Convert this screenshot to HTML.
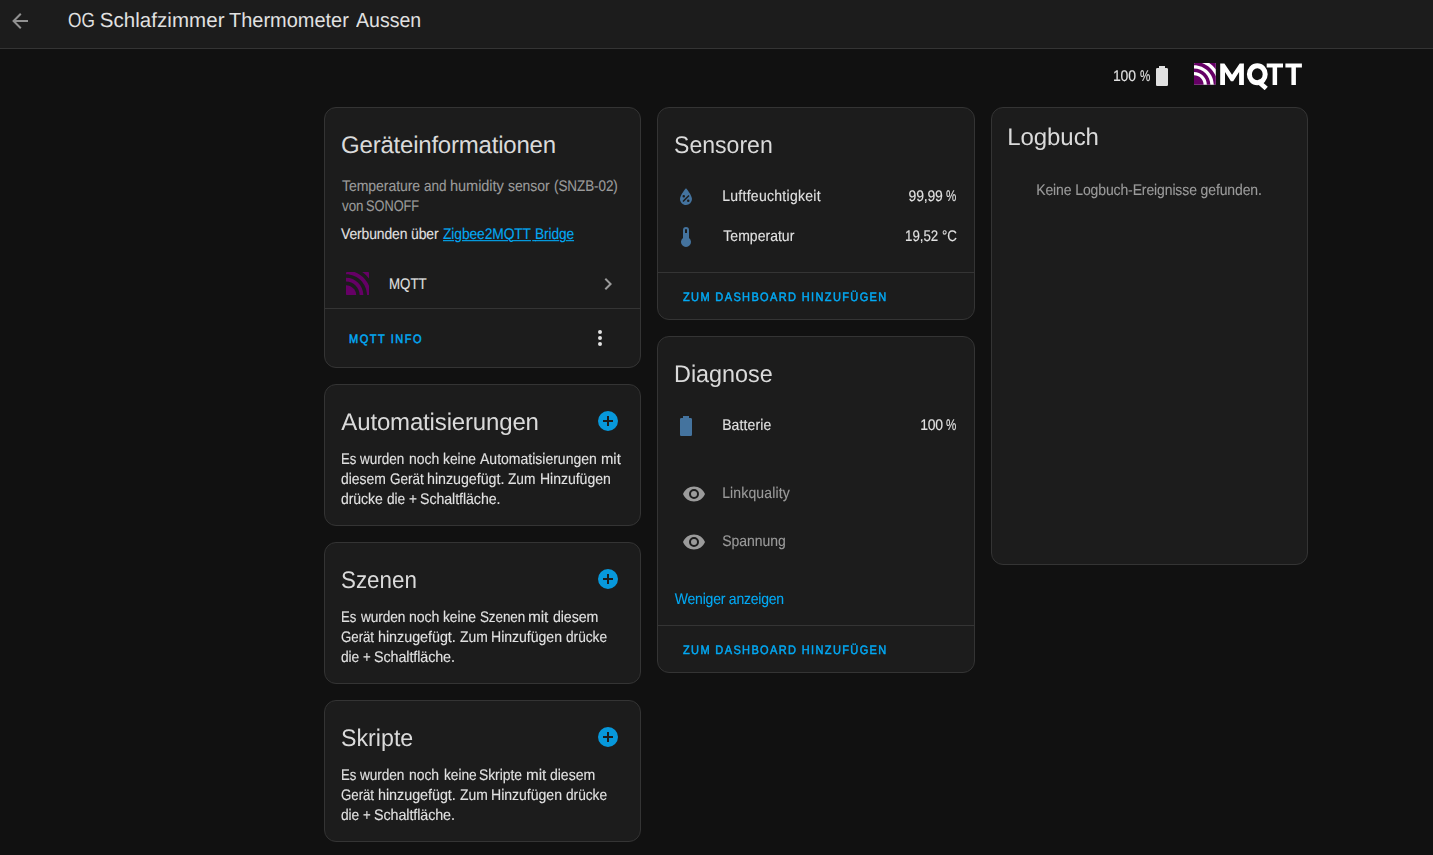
<!DOCTYPE html>
<html lang="de"><head><meta charset="utf-8"><title>OG Schlafzimmer Thermometer Aussen</title>
<style>
html,body{margin:0;padding:0}
body{width:1433px;height:855px;overflow:hidden;position:relative;background:#111111;
 font-family:"Liberation Sans",sans-serif;color:#e1e1e1}
.t{position:absolute;white-space:pre;line-height:20px;height:20px;margin:0;padding:0;display:block;font-weight:400;text-decoration:none;text-rendering:geometricPrecision}
.ul,.ul .w{text-decoration:underline;text-decoration-thickness:.91px;text-underline-offset:.7px}
.btn{-webkit-text-stroke:.5px currentColor}
.b{-webkit-text-stroke:.1px currentColor}
.w{display:inline-block;transform-origin:0 50%}
.pc{display:inline-block;width:.74em;transform:scaleX(.83);transform-origin:0 50%}
.box{position:absolute;box-sizing:border-box;margin:0;padding:0}
header.box{background:#1c1c1c;border-bottom:1px solid #343434}
.card{background:#1c1c1c;border:1px solid #343434;border-radius:12px}
.g{will-change:transform}
.ic{position:absolute;display:block}
.hr{position:absolute;left:0;width:100%;height:1px;background:#343434}
</style></head>
<body>
<header class="box" style="left:0px;top:0px;width:1433px;height:49px;">
<svg class="ic" style="left:8px;top:8.5px;width:24px;height:24px" viewBox="0 0 24 24"><path fill="#919191" d="M20,11V13H8L13.5,18.5L12.08,19.92L4.16,12L12.08,4.08L13.5,5.5L8,11H20Z"/></svg>
<span class="t" style="left:68.16px;top:11.00px;font-size:20.5px;letter-spacing:0.000px;color:#e1e1e1;transform:scaleX(0.8411);transform-origin:0 15.90px;">OG</span>
<span class="t" style="left:99.65px;top:11.00px;font-size:20.5px;letter-spacing:0.066px;color:#e1e1e1;">Schlafzimmer</span>
<span class="t" style="left:229.28px;top:11.00px;font-size:20.5px;letter-spacing:0.000px;color:#e1e1e1;transform:scaleX(0.9739);transform-origin:0 15.90px;">Thermometer</span>
<span class="t" style="left:355.85px;top:11.00px;font-size:20.5px;letter-spacing:0.000px;color:#e1e1e1;transform:scaleX(0.9524);transform-origin:0 15.90px;">Aussen</span>
</header>
<div class="box g" style="left:1100px;top:56px;width:220px;height:40px;">
<span class="t b" style="left:12.97px;top:9.65px;font-size:14px;letter-spacing:-0.135px;color:#e1e1e1;transform:scaleY(1.1);transform-origin:0 14.85px;">100 <span class="pc">%</span></span>
<svg class="ic" style="left:50px;top:8px;width:24px;height:24px" viewBox="0 0 24 24"><path fill="#e1e1e1" d="M16.67,4H15V2H9V4H7.33A1.33,1.33 0 0,0 6,5.33V20.67C6,21.4 6.6,22 7.33,22H16.67A1.33,1.33 0 0,0 18,20.67V5.33C18,4.6 17.4,4 16.67,4Z"/></svg>
<svg class="ic" style="left:94px;top:7.2px;width:21.8px;height:21.8px" viewBox="7.1 7.1 305.8 305.8"><rect x="7.1" y="7.1" width="305.8" height="305.8" rx="15" fill="#fff"/><path fill="#660066" d="M7.1,180.6v117.1c0,8.4,6.8,15.3,15.3,15.3H142C141.1,239.8,80.9,180.7,7.1,180.6z"/><path fill="#660066" d="M7.1,84.1v49.8c99,0.9,179.4,80.7,180.4,179.1h48.9C235.6,186.7,133.1,84.2,7.1,84.1z"/><path fill="#660066" d="M312.9,297.6V193.5C278.1,107.2,207.3,38.9,119,7.1H22.4c-8.4,0-15.3,6.8-15.3,15.3v15c152.6,0.9,276.6,123.9,277.6,275.6h13C306.1,312.9,312.9,306.1,312.9,297.6z"/><path fill="#660066" d="M272.6,49.8c14.5,14.4,28.6,31.7,40.4,47.8V22.4c0-8.4-6.8-15.3-15.3-15.3h-77.3C238.4,19.7,256.6,33.9,272.6,49.8z"/></svg>
<svg class="ic" style="left:93px;top:6px;width:112px;height:28px" viewBox="0 0 112 28">
<g fill="#fff">
<path d="M27.2,22.9V1.5h4.2l7.65,11.2l7.65,-11.2h4.2V22.9h-4.8V9.9l-5.9,9.3h-2.3l-5.9,-9.3V22.9z"/>
<ellipse cx="64.3" cy="12.2" rx="7.9" ry="8.5" fill="none" stroke="#fff" stroke-width="5"/>
<path d="M62.6,20.2l3.6,-3.0l8.6,7.6l-3.1,3.4z"/>
<path d="M73.7,1.5h16.3v3.9h-5.9v17.5h-4.5v-17.5h-5.9z"/>
<path d="M92.4,1.5h16.5v3.9h-6v17.5h-4.5v-17.5h-6z"/>
</g></svg>
</div>
<section class="box card" style="left:324px;top:107px;width:317px;height:261px;">
<h2 class="t" style="left:16.08px;top:27.88px;font-size:24px;letter-spacing:-0.214px;color:#dadada;">Geräteinformationen</h2>
<p class="t b" style="left:16.53px;top:68.15px;font-size:14px;letter-spacing:-0.067px;color:#9b9b9b;transform:scaleY(1.1);transform-origin:0 14.85px;"><span class="w" style="transform:scaleX(1.0029);">Temperature</span> <span class="w" style="margin-left:0.44px;transform:scaleX(0.9653);">and</span> <span class="w" style="margin-left:-0.43px;transform:scaleX(1.0410);">humidity</span> <span class="w" style="margin-left:2.06px;transform:scaleX(0.9962);">sensor</span> <span class="w" style="margin-left:0.51px;transform:scaleX(0.9618);">(SNZB-02)</span></p>
<p class="t b" style="left:16.58px;top:88.15px;font-size:14px;letter-spacing:0.000px;color:#9b9b9b;transform:scaleY(1.1);transform-origin:0 14.85px;"><span class="w" style="transform:scaleX(0.9536);">von</span> <span class="w" style="margin-left:-1.65px;transform:scaleX(0.9109);">SONOFF</span></p>
<span class="t b" style="left:16.40px;top:115.85px;font-size:14px;letter-spacing:-0.100px;color:#e1e1e1;transform:scaleY(1.1);transform-origin:0 14.85px;"><span class="w" style="transform:scaleX(0.9931);">Verbunden</span> <span class="w" style="margin-left:-1.06px;transform:scaleX(0.9965);">über</span></span>
<a class="t b ul" style="left:118.04px;top:115.85px;font-size:14px;letter-spacing:-0.100px;color:#03a9f4;transform:scaleY(1.1);transform-origin:0 14.85px;"><span class="w" style="transform:scaleX(0.9867);">Zigbee2MQTT</span> <span class="w" style="margin-left:-0.51px;transform:scaleX(0.9791);">Bridge</span></a>
<svg class="ic" style="left:20.5px;top:164.2px;width:23.2px;height:23.2px" viewBox="7.1 7.1 305.8 305.8"><path fill="#660066" d="M7.1,180.6v117.1c0,8.4,6.8,15.3,15.3,15.3H142C141.1,239.8,80.9,180.7,7.1,180.6z"/><path fill="#660066" d="M7.1,84.1v49.8c99,0.9,179.4,80.7,180.4,179.1h48.9C235.6,186.7,133.1,84.2,7.1,84.1z"/><path fill="#660066" d="M312.9,297.6V193.5C278.1,107.2,207.3,38.9,119,7.1H22.4c-8.4,0-15.3,6.8-15.3,15.3v15c152.6,0.9,276.6,123.9,277.6,275.6h13C306.1,312.9,312.9,306.1,312.9,297.6z"/><path fill="#660066" d="M272.6,49.8c14.5,14.4,28.6,31.7,40.4,47.8V22.4c0-8.4-6.8-15.3-15.3-15.3h-77.3C238.4,19.7,256.6,33.9,272.6,49.8z"/></svg>
<span class="t b" style="left:64.06px;top:166.05px;font-size:14px;letter-spacing:0.000px;color:#e1e1e1;transform:scale(0.9497,1.1);transform-origin:0 14.85px;">MQTT</span>
<svg class="ic" style="left:271px;top:164px;width:24px;height:24px" viewBox="0 0 24 24"><path fill="#9b9b9b" d="M8.59,16.58L13.17,12L8.59,7.41L10,6L16,12L10,18L8.59,16.58Z"/></svg>
<div class="hr" style="top:200px"></div>
<span class="t btn" style="left:24.35px;top:220.56px;font-size:12.25px;letter-spacing:1.684px;color:#03a9f4;transform:scaleX(0.9000);transform-origin:0 14.24px;">MQTT INFO</span>
<svg class="ic" style="left:263px;top:218px;width:24px;height:24px" viewBox="0 0 24 24"><path fill="#e1e1e1" d="M12,16A2,2 0 0,1 14,18A2,2 0 0,1 12,20A2,2 0 0,1 10,18A2,2 0 0,1 12,16M12,10A2,2 0 0,1 14,12A2,2 0 0,1 12,14A2,2 0 0,1 10,12A2,2 0 0,1 12,10M12,4A2,2 0 0,1 14,6A2,2 0 0,1 12,8A2,2 0 0,1 10,6A2,2 0 0,1 12,4Z"/></svg>
</section>
<section class="box card g" style="left:324px;top:384px;width:317px;height:142px;">
<h2 class="t" style="left:16.35px;top:28.28px;font-size:24px;letter-spacing:-0.158px;color:#dadada;">Automatisierungen</h2>
<svg class="ic" style="left:271px;top:24px;width:24px;height:24px" viewBox="0 0 24 24"><path fill="#0798db" d="M17,13H13V17H11V13H7V11H11V7H13V11H17M12,2A10,10 0 0,0 2,12A10,10 0 0,0 12,22A10,10 0 0,0 22,12A10,10 0 0,0 12,2Z"/></svg>
<p class="t b" style="left:15.87px;top:64.25px;font-size:14px;letter-spacing:-0.002px;color:#e1e1e1;transform:scaleY(1.1);transform-origin:0 14.85px;"><span class="w" style="transform:scaleX(0.9385);">Es</span> <span class="w" style="margin-left:-0.77px;transform:scaleX(0.9649);">wurden</span> <span class="w" style="margin-left:-0.93px;transform:scaleX(0.9983);">noch</span> <span class="w" style="margin-left:-0.08px;transform:scaleX(0.9872);">keine</span> <span class="w" style="margin-left:-0.49px;transform:scaleX(1.0010);">Automatisierungen</span> <span class="w" style="margin-left:0.39px;transform:scaleX(1.0597);">mit</span></p>
<p class="t b" style="left:16.47px;top:84.15px;font-size:14px;letter-spacing:-0.037px;color:#e1e1e1;transform:scaleY(1.1);transform-origin:0 14.85px;"><span class="w" style="transform:scaleX(0.9954);">diesem</span> <span class="w" style="margin-left:-0.12px;transform:scaleX(0.9650);">Gerät</span> <span class="w" style="margin-left:-1.47px;transform:scaleX(1.0205);">hinzugefügt.</span> <span class="w" style="margin-left:1.26px;transform:scaleX(0.9800);">Zum</span> <span class="w" style="margin-left:0.12px;transform:scaleX(1.0037);">Hinzufügen</span></p>
<p class="t b" style="left:16.47px;top:104.05px;font-size:14px;letter-spacing:-0.061px;color:#e1e1e1;transform:scaleY(1.1);transform-origin:0 14.85px;"><span class="w" style="transform:scaleX(0.9993);">drücke</span> <span class="w" style="margin-left:-0.12px;transform:scaleX(0.9815);">die</span> <span class="w" style="margin-left:-0.71px;transform:scaleX(0.9733);">+</span> <span class="w" style="margin-left:-0.05px;transform:scaleX(1.0132);">Schaltfläche.</span></p>
</section>
<section class="box card g" style="left:324px;top:542px;width:317px;height:142px;">
<h2 class="t" style="left:16.30px;top:28.28px;font-size:24px;letter-spacing:0.000px;color:#dadada;transform:scaleX(0.9314);transform-origin:0 17.12px;">Szenen</h2>
<svg class="ic" style="left:271px;top:24px;width:24px;height:24px" viewBox="0 0 24 24"><path fill="#0798db" d="M17,13H13V17H11V13H7V11H11V7H13V11H17M12,2A10,10 0 0,0 2,12A10,10 0 0,0 12,22A10,10 0 0,0 22,12A10,10 0 0,0 12,2Z"/></svg>
<p class="t b" style="left:15.87px;top:64.25px;font-size:14px;letter-spacing:-0.100px;color:#e1e1e1;transform:scaleY(1.1);transform-origin:0 14.85px;"><span class="w" style="transform:scaleX(0.9385);">Es</span> <span class="w" style="margin-left:0.38px;transform:scaleX(0.9774);">wurden</span> <span class="w" style="margin-left:-1.08px;transform:scaleX(1.0079);">noch</span> <span class="w" style="margin-left:0.09px;transform:scaleX(0.9950);">keine</span> <span class="w" style="margin-left:-0.01px;transform:scaleX(0.9604);">Szenen</span> <span class="w" style="margin-left:-2.39px;transform:scaleX(1.1000);">mit</span> <span class="w" style="margin-left:2.87px;transform:scaleX(1.0151);">diesem</span></p>
<p class="t b" style="left:15.91px;top:84.15px;font-size:14px;letter-spacing:-0.035px;color:#e1e1e1;transform:scaleY(1.1);transform-origin:0 14.85px;"><span class="w" style="transform:scaleX(0.9478);">Gerät</span> <span class="w" style="margin-left:-1.87px;transform:scaleX(1.0251);">hinzugefügt.</span> <span class="w" style="margin-left:2.32px;transform:scaleX(0.9922);">Zum</span> <span class="w" style="margin-left:-0.47px;transform:scaleX(1.0072);">Hinzufügen</span> <span class="w" style="margin-left:0.22px;transform:scaleX(0.9807);">drücke</span></p>
<p class="t b" style="left:16.47px;top:104.05px;font-size:14px;letter-spacing:-0.085px;color:#e1e1e1;transform:scaleY(1.1);transform-origin:0 14.85px;"><span class="w" style="transform:scaleX(0.9870);">die</span> <span class="w" style="margin-left:-0.61px;transform:scaleX(0.9426);">+</span> <span class="w" style="margin-left:-1.05px;transform:scaleX(1.0230);">Schaltfläche.</span></p>
</section>
<section class="box card g" style="left:324px;top:700px;width:317px;height:142px;">
<h2 class="t" style="left:16.28px;top:28.28px;font-size:24px;letter-spacing:0.000px;color:#dadada;transform:scaleX(0.9672);transform-origin:0 17.12px;">Skripte</h2>
<svg class="ic" style="left:271px;top:24px;width:24px;height:24px" viewBox="0 0 24 24"><path fill="#0798db" d="M17,13H13V17H11V13H7V11H11V7H13V11H17M12,2A10,10 0 0,0 2,12A10,10 0 0,0 12,22A10,10 0 0,0 22,12A10,10 0 0,0 12,2Z"/></svg>
<p class="t b" style="left:15.87px;top:64.25px;font-size:14px;letter-spacing:-0.049px;color:#e1e1e1;transform:scaleY(1.1);transform-origin:0 14.85px;"><span class="w" style="transform:scaleX(0.9385);">Es</span> <span class="w" style="margin-left:-0.62px;transform:scaleX(0.9733);">wurden</span> <span class="w" style="margin-left:-0.39px;transform:scaleX(0.9947);">noch</span> <span class="w" style="margin-left:0.06px;transform:scaleX(0.9823);">keine</span> <span class="w" style="margin-left:-1.32px;transform:scaleX(0.9924);">Skripte</span> <span class="w" style="margin-left:-0.03px;transform:scaleX(1.0890);">mit</span> <span class="w" style="margin-left:1.31px;transform:scaleX(1.0061);">diesem</span></p>
<p class="t b" style="left:15.91px;top:84.15px;font-size:14px;letter-spacing:-0.035px;color:#e1e1e1;transform:scaleY(1.1);transform-origin:0 14.85px;"><span class="w" style="transform:scaleX(0.9478);">Gerät</span> <span class="w" style="margin-left:-1.87px;transform:scaleX(1.0251);">hinzugefügt.</span> <span class="w" style="margin-left:2.32px;transform:scaleX(0.9922);">Zum</span> <span class="w" style="margin-left:-0.47px;transform:scaleX(1.0072);">Hinzufügen</span> <span class="w" style="margin-left:0.22px;transform:scaleX(0.9807);">drücke</span></p>
<p class="t b" style="left:16.47px;top:104.05px;font-size:14px;letter-spacing:-0.085px;color:#e1e1e1;transform:scaleY(1.1);transform-origin:0 14.85px;"><span class="w" style="transform:scaleX(0.9870);">die</span> <span class="w" style="margin-left:-0.61px;transform:scaleX(0.9426);">+</span> <span class="w" style="margin-left:-1.05px;transform:scaleX(1.0230);">Schaltfläche.</span></p>
</section>
<section class="box card g" style="left:657px;top:107px;width:318px;height:213px;">
<h2 class="t" style="left:16.08px;top:27.58px;font-size:24px;letter-spacing:0.000px;color:#dadada;transform:scaleX(0.9614);transform-origin:0 17.12px;">Sensoren</h2>
<svg class="ic" style="left:16px;top:77px;width:24px;height:24px" viewBox="0 0 24 24"><path fill="#44739e" d="M12,3.25C12,3.25 6,10 6,14C6,17.32 8.69,20 12,20A6,6 0 0,0 18,14C18,10 12,3.25 12,3.25M14.47,9.97L15.53,11.03L9.53,17.03L8.47,15.97M9.75,10A1.25,1.25 0 0,1 11,11.25A1.25,1.25 0 0,1 9.75,12.5A1.25,1.25 0 0,1 8.5,11.25A1.25,1.25 0 0,1 9.75,10M14.25,14.5A1.25,1.25 0 0,1 15.5,15.75A1.25,1.25 0 0,1 14.25,17A1.25,1.25 0 0,1 13,15.75A1.25,1.25 0 0,1 14.25,14.5Z"/></svg>
<span class="t b" style="left:64.14px;top:77.85px;font-size:14px;letter-spacing:0.291px;color:#e1e1e1;transform:scaleY(1.1);transform-origin:0 14.85px;">Luftfeuchtigkeit</span>
<span class="t b" style="left:250.60px;top:77.85px;font-size:14px;letter-spacing:-0.188px;color:#e1e1e1;transform:scaleY(1.1);transform-origin:0 14.85px;">99,99 <span class="pc">%</span></span>
<svg class="ic" style="left:16px;top:117px;width:24px;height:24px" viewBox="0 0 24 24"><path fill="#44739e" d="M15,13V5A3,3 0 0,0 9,5V13A5,5 0 1,0 15,13M12,4A1,1 0 0,1 13,5V8H11V5A1,1 0 0,1 12,4Z"/></svg>
<span class="t b" style="left:65.33px;top:118.05px;font-size:14px;letter-spacing:0.023px;color:#e1e1e1;transform:scaleY(1.1);transform-origin:0 14.85px;">Temperatur</span>
<span class="t b" style="left:247.12px;top:118.05px;font-size:14px;letter-spacing:0.000px;color:#e1e1e1;transform:scale(0.9496,1.1);transform-origin:0 14.85px;">19,52 °C</span>
<div class="hr" style="top:164px"></div>
<span class="t btn" style="left:25.14px;top:178.56px;font-size:12.25px;letter-spacing:1.503px;color:#03a9f4;transform:scaleX(0.9000);transform-origin:0 14.24px;">ZUM DASHBOARD HINZUFÜGEN</span>
</section>
<section class="box card g" style="left:657px;top:336px;width:318px;height:337px;">
<h2 class="t" style="left:15.73px;top:27.98px;font-size:24px;letter-spacing:0.000px;color:#dadada;transform:scaleX(0.9737);transform-origin:0 17.12px;">Diagnose</h2>
<svg class="ic" style="left:16px;top:77px;width:24px;height:24px" viewBox="0 0 24 24"><path fill="#44739e" d="M16.67,4H15V2H9V4H7.33A1.33,1.33 0 0,0 6,5.33V20.67C6,21.4 6.6,22 7.33,22H16.67A1.33,1.33 0 0,0 18,20.67V5.33C18,4.6 17.4,4 16.67,4Z"/></svg>
<span class="t b" style="left:64.14px;top:78.15px;font-size:14px;letter-spacing:0.122px;color:#e1e1e1;transform:scaleY(1.1);transform-origin:0 14.85px;">Batterie</span>
<span class="t b" style="left:262.27px;top:78.15px;font-size:14px;letter-spacing:-0.285px;color:#e1e1e1;transform:scaleY(1.1);transform-origin:0 14.85px;">100 <span class="pc">%</span></span>
<svg class="ic" style="left:24px;top:145px;width:24px;height:24px" viewBox="0 0 24 24"><path fill="#9b9b9b" d="M12,9A3,3 0 0,0 9,12A3,3 0 0,0 12,15A3,3 0 0,0 15,12A3,3 0 0,0 12,9M12,17A5,5 0 0,1 7,12A5,5 0 0,1 12,7A5,5 0 0,1 17,12A5,5 0 0,1 12,17M12,4.5C7,4.5 2.73,7.61 1,12C2.73,16.39 7,19.5 12,19.5C17,19.5 21.27,16.39 23,12C21.27,7.61 17,4.5 12,4.5Z"/></svg>
<span class="t b" style="left:64.14px;top:146.05px;font-size:14px;letter-spacing:0.143px;color:#9b9b9b;transform:scaleY(1.1);transform-origin:0 14.85px;">Linkquality</span>
<svg class="ic" style="left:24px;top:193px;width:24px;height:24px" viewBox="0 0 24 24"><path fill="#9b9b9b" d="M12,9A3,3 0 0,0 9,12A3,3 0 0,0 12,15A3,3 0 0,0 15,12A3,3 0 0,0 12,9M12,17A5,5 0 0,1 7,12A5,5 0 0,1 12,7A5,5 0 0,1 17,12A5,5 0 0,1 12,17M12,4.5C7,4.5 2.73,7.61 1,12C2.73,16.39 7,19.5 12,19.5C17,19.5 21.27,16.39 23,12C21.27,7.61 17,4.5 12,4.5Z"/></svg>
<span class="t b" style="left:64.19px;top:194.25px;font-size:14px;letter-spacing:-0.027px;color:#9b9b9b;transform:scaleY(1.1);transform-origin:0 14.85px;">Spannung</span>
<span class="t b" style="left:16.80px;top:251.75px;font-size:14px;letter-spacing:-0.216px;color:#03a9f4;transform:scaleY(1.1);transform-origin:0 14.85px;">Weniger anzeigen</span>
<div class="hr" style="top:288px"></div>
<span class="t btn" style="left:25.14px;top:302.66px;font-size:12.25px;letter-spacing:1.503px;color:#03a9f4;transform:scaleX(0.9000);transform-origin:0 14.24px;">ZUM DASHBOARD HINZUFÜGEN</span>
</section>
<section class="box card g" style="left:991px;top:107px;width:317px;height:458px;">
<h2 class="t" style="left:15.22px;top:19.78px;font-size:24px;letter-spacing:-0.059px;color:#dadada;">Logbuch</h2>
<p class="t b" style="left:44.24px;top:71.85px;font-size:14px;letter-spacing:-0.120px;color:#9b9b9b;transform:scaleY(1.1);transform-origin:0 14.85px;">Keine Logbuch-Ereignisse gefunden.</p>
</section>
</body></html>
